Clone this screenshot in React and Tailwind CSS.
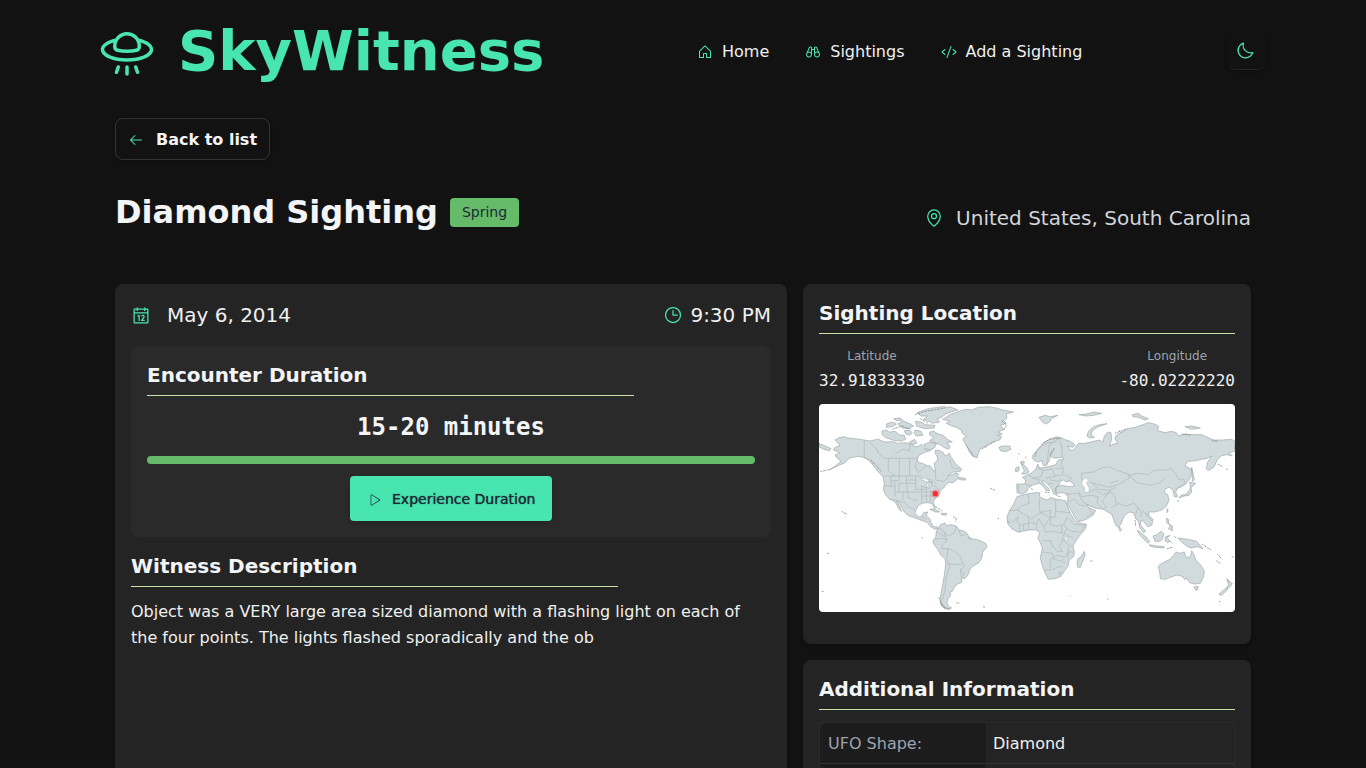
import React from "react";
import {
  PiFlyingSaucer,
  PiHouse,
  PiBinoculars,
  PiCode,
  PiMoon,
  PiArrowLeft,
  PiMapPin,
  PiCalendar,
  PiClock,
  PiPlayLight,
} from "react-icons/pi";

const LAND = [
  // North and Central America
  "M60 120L72 113L88 110L98 114L120 116L148 120L165 123L178 120L190 117L198 122L212 126L235 125L250 131L262 128L285 130L296 138L308 140L320 133L326 144L334 150L345 138L352 146L344 153L330 156L318 163L310 168L307 180L312 188L322 190L337 197L346 198L352 206L356 214L361 208L358 198L358 190L368 180L366 168L360 160L362 150L375 152L385 158L390 168L398 164L403 160L408 172L415 180L420 190L430 198L440 208L436 214L415 216L404 222L398 228L412 224L424 218L430 222L428 230L436 233L450 235L452 240L440 240L428 236L420 244L412 248L402 246L392 255L386 264L374 272L376 278L370 288L362 294L356 302L354 308L360 318L360 326L350 310L335 308L322 310L310 316L304 328L300 338L304 346L312 351L322 347L326 338L338 336L334 348L345 357L348 368L356 380L366 380L370 386L360 388L347 380L336 367L316 360L298 353L280 347L268 336L260 322L252 308L245 304L254 320L260 334L254 330L244 312L236 302L224 298L212 285L205 268L208 250L204 230L192 218L182 206L172 192L160 180L148 173L132 169L116 172L104 174L98 180L90 188L72 196L44 209L66 194L78 184L64 172L60 165L74 158L66 154L55 150L60 142L74 138L72 132Z",
  // South America
  "M370 384L376 374L390 369L394 377L408 374L424 378L432 390L446 393L456 400L462 411L470 416L490 420L512 430L516 440L503 457L500 475L492 488L476 497L465 508L460 522L450 536L440 533L440 547L424 554L416 566L412 574L404 577L408 585L398 598L396 610L402 620L410 624L400 627L386 620L378 608L376 592L380 570L384 548L388 525L392 495L391 478L378 466L368 448L356 432L354 422L362 412L364 396Z",
  // Greenland
  "M383 58L396 50L404 44L424 37L436 32L455 28L470 30L490 22L520 20L545 24L562 30L595 36L574 42L576 54L566 62L574 70L556 76L566 88L550 96L562 102L548 106L560 110L554 120L530 127L512 138L496 146L490 160L486 174L472 168L462 154L456 138L446 124L444 116L454 110L442 100L438 90L424 82L410 78L394 70L404 64Z",
  // Arctic archipelago
  "M344 96L356 94L370 102L384 106L398 118L412 126L396 127L406 140L400 148L386 142L376 134L358 128L344 122L356 112L344 104Z",
  "M200 94L214 90L224 96L240 94L252 104L268 106L272 118L256 124L232 120L210 112L202 104Z",
  "M306 38L322 32L340 26L380 20L410 22L428 30L408 36L392 42L382 50L366 58L374 66L352 70L342 64L326 58L338 48L318 48Z",
  "M302 64L318 66L330 74L360 76L358 84L330 86L304 78Z",
  "M268 92L282 90L292 98L284 106L272 102Z",
  "M300 90L318 94L324 106L304 108L298 100Z",
  "M214 72L232 66L244 72L232 80L214 82Z",
  "M248 72L264 62L282 70L296 78L280 86L262 84Z",
  "M236 56L256 54L262 60L244 62Z",
  "M284 126L298 118L306 128L294 134Z",
  "M326 134L344 126L364 132L358 144L344 150L332 146Z",
  // Iceland, Great Britain, Ireland
  "M552 142L562 138L584 138L588 148L572 155L556 152Z",
  "M618 184L628 184L626 194L636 204L642 216L634 222L620 222L628 212L622 200Z",
  "M602 204L612 200L612 212L602 216Z",
  // Eurasia
  "M654 178L653 166L664 154L678 140L686 128L704 118L724 110L738 113L748 118L766 124L780 134L774 142L758 138L764 150L776 150L784 138L790 130L812 130L836 124L852 120L864 126L868 108L878 96L888 98L890 116L884 138L896 132L908 130L900 116L904 106L920 96L940 86L960 82L984 74L1000 68L1018 72L1030 78L1028 92L1050 98L1070 94L1084 98L1092 108L1110 102L1140 104L1160 104L1178 112L1196 120L1222 120L1250 118L1260 124L1258 154L1242 158L1252 168L1234 164L1218 168L1206 180L1198 200L1180 212L1174 206L1178 186L1190 168L1174 176L1160 178L1142 182L1118 184L1110 198L1122 204L1130 208L1128 230L1112 252L1096 262L1088 264L1082 276L1088 290L1078 290L1074 270L1062 262L1050 268L1048 276L1058 284L1062 300L1054 318L1040 330L1020 336L1000 336L1002 346L1014 358L1010 376L998 380L988 366L978 360L976 374L992 394L986 398L974 382L970 362L962 356L956 338L942 336L926 350L918 372L910 382L902 376L890 342L878 336L866 328L840 324L826 318L814 312L820 322L842 332L834 346L814 358L790 366L780 354L770 334L758 314L758 296L760 282L740 278L726 280L720 270L724 260L740 256L762 260L778 258L774 250L762 242L754 246L746 240L736 244L732 254L724 262L722 276L726 286L716 282L710 266L698 252L686 242L680 240L688 252L700 264L704 272L694 272L686 260L674 250L664 252L652 256L640 264L634 276L622 282L606 278L605 252L630 252L632 240L622 232L636 226L650 218L662 208L668 192L674 204L690 202L708 198L722 194L730 180L746 178L744 172L728 174L716 174L706 168L708 156L718 144L712 156L706 166L704 180L694 196L684 196L682 182L668 186Z",
  // Africa
  "M606 290L620 286L636 282L660 278L674 278L674 290L688 298L700 300L706 292L724 298L740 300L752 302L756 316L766 340L778 360L790 370L814 372L812 386L796 404L782 424L774 438L778 454L776 470L762 480L760 496L748 514L736 530L720 536L700 538L690 518L682 498L676 474L682 444L676 428L668 414L674 402L666 390L642 390L626 393L610 397L590 386L578 370L576 350L584 332L596 312Z",
  "M788 478L796 472L804 462L808 454L810 466L804 482L796 502L788 502L786 490Z",
  // Australia, Tasmania, New Zealand
  "M1030 500L1034 494L1052 484L1066 478L1074 468L1084 456L1096 460L1108 456L1112 468L1122 474L1128 464L1130 452L1138 466L1142 480L1156 494L1168 512L1166 530L1156 550L1138 552L1124 548L1116 536L1108 538L1104 530L1086 525L1066 532L1050 538L1036 536L1034 518Z",
  "M1138 560L1150 560L1146 572L1140 568Z",
  "M1236 536L1242 544L1252 550L1246 560L1236 566L1240 552Z",
  "M1234 562L1238 568L1228 578L1218 587L1212 582L1224 572Z",
  // South-east Asia and Pacific islands
  "M966 390L978 398L994 412L1004 424L1000 430L986 418L974 404Z",
  "M1004 434L1026 438L1048 440L1046 444L1020 442L1004 438Z",
  "M1014 408L1026 404L1038 394L1046 400L1044 414L1036 424L1020 424Z",
  "M1052 410L1066 406L1056 412L1064 424L1058 428L1050 422Z",
  "M1090 414L1104 416L1120 418L1144 424L1156 436L1164 446L1146 440L1128 444L1112 436L1100 426Z",
  "M1054 354L1062 360L1060 370L1072 378L1072 392L1060 386L1066 378L1056 368Z",
  "M1056 326L1060 330L1056 338Z",
  "M912 380L920 388L916 394L912 388Z",
  // Japan and Sakhalin
  "M1130 202L1134 220L1138 240L1132 244L1132 226Z",
  "M1124 246L1142 250L1134 258L1126 262Z",
  "M1128 262L1130 276L1122 286L1108 288L1092 294L1098 286L1114 282L1122 272Z",
  // Svalbard, Novaya Zemlya, northern islands
  "M672 52L690 46L706 50L728 46L710 56L704 66L692 72L682 66Z",
  "M816 108L820 94L836 80L854 74L876 71L850 80L834 90L828 104L838 112L824 114Z",
  "M952 44L970 40L980 48L1000 56L990 60L970 52L954 50Z",
  "M1110 80L1130 78L1156 84L1130 88Z",
  "M792 44L814 42L836 36L860 40L836 46L812 48Z",
  // Caribbean
  "M344 328L356 326L374 336L362 336Z",
  "M378 340L396 340L392 346L380 344Z",
  "M12 130L30 138L48 146L44 152L26 148L12 140Z",
  "M376 606L384 622L404 628L390 626L378 616Z",
];

const WATER = [
  "M803 240L812 234L820 240L814 250L822 262L822 276L810 278L808 262L800 252Z",
  "M318 238L328 232L346 240L336 246Z",
  "M336 248L342 258L334 262Z",
  "M348 244L356 250L362 258L354 256Z",
  "M750 412L758 410L756 420L748 420Z",
];

const BORDERS =
  "M148 120V174L164 178L174 194M164 126L180 142L192 160L206 175H308M284 130V152L262 148L240 162M220 175V212L240 228M253 175V228M284 175V228M207 228H312L326 236L350 240L362 252M308 175L300 200L312 220M312 215L336 197M361 208L362 240L386 244L400 232M404 178L412 204L440 208M228 228V262M252 228V242H228M274 228V252M274 240H302M302 228V268M207 258H240M240 242V290M252 250H300M252 250V276M276 254V278M240 276H320M264 276V300M280 278V294L306 302M302 268H334M320 256V308M334 262V306M346 272V306M320 276L372 274M320 288H360M224 298L252 302L270 308L282 322L300 330M318 258L346 266L352 254L374 270M356 420L378 414L394 420L388 396L372 384M388 396L400 408L418 398L424 380M432 390L436 406L450 404M382 434L398 420M382 434L380 446L398 446L396 478M398 446L418 452L436 470L448 500L436 508L448 520L440 534M396 490L418 494L440 492M398 480L404 500L394 530L390 570L382 600M436 508L438 530M362 392L388 410M316 360L324 350L334 360M694 196L700 160L704 132L732 116L740 140L742 172M686 138L696 128L724 126M742 176L738 196L746 206L742 222L770 234L756 246M668 204L684 212L678 230L660 234L640 226M684 212L712 206L720 230L692 234M742 204L720 206M720 226L742 226M704 240L730 244L736 236M650 234L672 238L670 250M610 256L612 278M632 254L650 256M700 250L716 252M724 260L732 258M800 240L800 220L836 216L860 204L880 200L908 212L940 222L942 234L910 254L884 262L850 254L824 246M942 226L970 220L1000 224L1018 210L1052 210L1068 206L1080 220L1094 240L1106 238L1110 250L1080 268M942 226L966 248L1006 256L1036 248L1052 232M904 262L884 270L902 294L900 306L932 318L958 310L968 322L962 344M884 272L862 304L874 322L864 328M822 276L842 268L862 284L886 278M832 250L852 268L884 270M790 274L800 290L828 286L850 290L846 310L862 324M762 282L790 280L806 308L826 318M760 306L778 296L792 314L812 318M814 350L832 340L820 322M796 358L790 366M968 322L980 336L976 352M984 332L998 350L1012 364M884 250L910 242M890 322L910 312M1002 346L990 340M674 296L672 318L676 338L706 352M722 298V334L766 338M720 334V352L706 352V330L676 338L650 356L640 350L606 330L620 318L642 310L640 282M606 330L582 332M640 350L642 368L664 372L672 356M590 368L610 352L606 366L620 376L642 368M614 374V396M626 370V392M640 370L642 390M664 372L666 390M672 356L686 380L706 352L706 374L724 378L746 374L756 386M686 380L690 396L718 394L740 400L740 376M746 374L756 352L778 374L810 376L796 396L770 394L756 386L748 398L742 420L734 440L742 454L726 454L712 438L708 422L682 422M742 420L772 442M748 400L774 414M684 456L712 460L716 476L706 476V510H690M716 472L730 466L748 472L760 456L776 456M716 476L736 484L746 478M712 510L730 500L744 500M740 484L750 490M760 440L758 476M736 516L730 522L736 524L740 516Z";

const ISLANDS =
  "M16 215L46 208M80 334L98 344M36 459L44 461M320 412L324 415M424 609L434 609M504 620L512 622M20 575L26 574M526 265L540 271M547 354L554 358M414 350L424 356L422 366M362 320L382 334M610 160L614 164M630 174L634 171M616 186L622 196M168 180L186 200L198 214M458 412L468 418M578 364L586 368M660 170L664 154L686 128L704 118L740 114M876 596L880 598M826 484L834 482M766 586L768 588M1160 432L1188 450M1206 462L1222 478M1204 482L1216 490M1250 472L1256 470M1212 604L1216 605M1064 422L1072 430M1078 410L1086 414M1088 300L1090 306M1208 192L1222 200M1234 206L1240 210M960 360L962 380M900 100L940 84M912 92L920 98M1100 102L1128 106M1190 122L1210 124M1056 446L1072 442M372 592L380 612L392 624M300 44L330 34L390 24M316 56L340 70M232 88L260 78L290 88M560 62L574 76L564 94M540 124L500 148M452 134L478 170M1236 538L1244 546M650 264L652 272M690 276L702 278M728 288L738 290M752 286L758 284M340 244L352 250";

function WorldMap() {
  return (
    <svg viewBox="12 12 1248 624" className="block h-[208px] w-full rounded bg-white" aria-label="World map">
      <g fill="#d1dadd" stroke="#929b9d" strokeWidth="1.7" strokeLinejoin="round">
        {LAND.map((d, i) => (
          <path key={i} d={d} />
        ))}
      </g>
      <g fill="#ffffff" stroke="#a5aeb0" strokeWidth="1.3">
        {WATER.map((d, i) => (
          <path key={i} d={d} />
        ))}
      </g>
      <path d={BORDERS} fill="none" stroke="#a3acae" strokeWidth="1.5" strokeLinejoin="round" />
      <path d={ISLANDS} fill="none" stroke="#7d8688" strokeWidth="2.2" strokeDasharray="6 2 9 3" />
      <circle cx="361" cy="281" r="13" fill="#ff3030" opacity="0.25" />
      <circle cx="361" cy="281" r="8" fill="#f92c2c" />
    </svg>
  );
}

function NavLink({ icon: Icon, children }) {
  return (
    <a className="flex items-center gap-[9px]">
      <Icon className="h-4 w-4 text-[#48e5b0]" />
      <span>{children}</span>
    </a>
  );
}

function SectionTitle({ children, className = "" }) {
  return (
    <h2 className={"h-[34px] border-b border-[#c5e1a5] text-xl leading-[26px] font-bold text-gray-100 " + className}>
      {children}
    </h2>
  );
}

function Coordinate({ label, value }) {
  return (
    <div className="flex flex-col items-center">
      <span className="text-xs leading-4 text-[#9ca3af]">{label}</span>
      <span className="mt-[5px] font-['DejaVu_Sans_Mono',monospace] text-base leading-6">{value}</span>
    </div>
  );
}

export default function App() {
  return (
    <div className="h-screen overflow-hidden bg-[#121212] font-['DejaVu_Sans',sans-serif] text-base text-[#f0f0f0]">
      <header className="flex h-[102px] items-center pr-[100px] pl-[99px]">
        <div className="flex w-[598px] items-center gap-[23px] text-[#48e5b0]">
          <PiFlyingSaucer className="mt-[3px] h-[56px] w-[56px]" />
          <span className="text-[56px] leading-none font-bold">SkyWitness</span>
        </div>
        <nav className="mt-[2px] flex items-center gap-9">
          <NavLink icon={PiHouse}>Home</NavLink>
          <NavLink icon={PiBinoculars}>Sightings</NavLink>
          <NavLink icon={PiCode}>Add a Sighting</NavLink>
        </nav>
        <button className="ml-auto flex h-9 w-[38px] items-center justify-center rounded-lg pr-1 text-[#48e5b0] shadow-[0_1px_0_#242424,0_2px_4px_rgba(0,0,0,0.35)]">
          <PiMoon className="h-5 w-5" />
        </button>
      </header>

      <main className="mx-auto w-[1136px] pt-4">
        <button className="flex h-[42px] w-[155px] items-center gap-3 rounded-lg border border-[#333333] pt-px pl-3 font-bold text-gray-100 shadow-md">
          <PiArrowLeft className="h-4 w-4 text-[#48e5b0]" />
          <span className="mt-px">Back to list</span>
        </button>

        <div className="mt-8 flex h-[92px] justify-between">
          <div className="flex h-10 items-center gap-3">
            <h1 className="text-[32px] leading-10 font-bold text-gray-100">Diamond Sighting</h1>
            <span className="flex h-[29px] items-center rounded bg-[#66bb6a] px-3 text-sm text-[#1f2937]">Spring</span>
          </div>
          <div className="mt-3 flex h-7 items-center gap-3 text-xl text-[#d1d5db]">
            <PiMapPin className="h-5 w-5 text-[#48e5b0]" />
            United States, South Carolina
          </div>
        </div>

        <div className="flex gap-4">
          <section className="h-[600px] w-[672px] rounded-lg bg-[#242424] px-4 pt-[17px] shadow-md">
            <div className="flex h-7 justify-between text-xl">
              <div className="flex items-center gap-4">
                <PiCalendar className="mt-px h-5 w-5 text-[#48e5b0]" />
                May 6, 2014
              </div>
              <div className="flex items-center gap-[7px]">
                <PiClock className="h-5 w-5 text-[#48e5b0]" />
                9:30 PM
              </div>
            </div>

            <div className="mt-[17px] h-[191px] rounded-lg bg-[#2a2a2a] p-4">
              <SectionTitle className="w-[487px]">Encounter Duration</SectionTitle>
              <p className="mt-[15px] text-center font-['DejaVu_Sans_Mono',monospace] text-2xl leading-8 font-bold text-gray-100">
                15-20 minutes
              </p>
              <div className="mt-[13px] h-2 rounded-full bg-[#66bb6a]" />
              <button className="mx-auto mt-3 flex h-[45px] w-[202px] items-center gap-[11px] rounded bg-[#48e5b0] pl-[17px] text-sm text-[#1f2937] shadow-md">
                <PiPlayLight className="mt-0.5 h-3.5 w-3.5" />
                <span className="whitespace-nowrap text-shadow-[0_0_1px_#1f2937]">Experience Duration</span>
              </button>
            </div>

            <SectionTitle className="mt-4 w-[487px]">Witness Description</SectionTitle>
            <p className="mt-3 leading-[26px]">
              Object was a VERY large area sized diamond with a flashing light on each of the four points. The lights
              flashed sporadically and the ob
            </p>
          </section>

          <div className="flex w-[448px] flex-col gap-4">
            <section className="h-[360px] rounded-lg bg-[#242424] px-4 pt-4 shadow-md">
              <SectionTitle>Sighting Location</SectionTitle>
              <div className="mt-[14px] mb-[11px] flex justify-between">
                <Coordinate label="Latitude" value="32.91833330" />
                <Coordinate label="Longitude" value="-80.02222220" />
              </div>
              <WorldMap />
            </section>

            <section className="h-[300px] rounded-lg bg-[#242424] px-4 pt-4 shadow-md">
              <SectionTitle>Additional Information</SectionTitle>
              <div className="mt-3 border border-[#2a2a2a]">
                <div className="flex h-[41px] items-center border-b border-[#333333]">
                  <div className="flex h-10 w-[166px] items-center rounded-tl-lg bg-[#1c1c1c] px-2 pt-[2px] text-[#9ca3af]">
                    UFO Shape:
                  </div>
                  <div className="px-[7px] pt-[2px]">Diamond</div>
                </div>
                <div className="flex h-[41px]">
                  <div className="w-[166px] bg-[#1c1c1c]" />
                </div>
              </div>
            </section>
          </div>
        </div>
      </main>
    </div>
  );
}
